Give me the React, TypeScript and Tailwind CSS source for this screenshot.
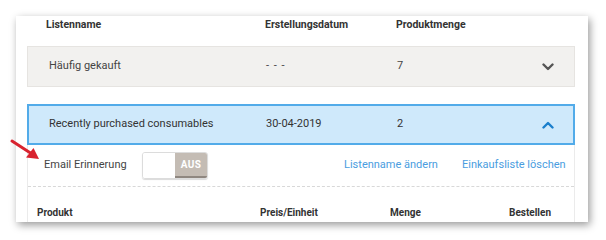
import React from "react";

function ChevronDown({ color }: { color: string }) {
  return (
    <svg width="12" height="8" viewBox="0 0 12 8">
      <path d="M1.5 1.5 L6 6 L10.5 1.5" fill="none" stroke={color} strokeWidth="2.4" strokeLinecap="round" strokeLinejoin="round" />
    </svg>
  );
}
function ChevronUp({ color }: { color: string }) {
  return (
    <svg width="12" height="8" viewBox="0 0 12 8">
      <path d="M1.5 6.5 L6 2 L10.5 6.5" fill="none" stroke={color} strokeWidth="2.4" strokeLinecap="round" strokeLinejoin="round" />
    </svg>
  );
}

export default function App() {
  return (
    <div className="relative w-[606px] h-[240px] bg-white overflow-hidden" style={{ fontFamily: "Roboto, 'Liberation Sans', sans-serif" }}>
      <div className="ml-[16px] mt-[16px] w-[572px] h-[206px] bg-white shadow-[2px_3px_8px_rgba(0,0,0,0.4)] overflow-hidden">
        {/* header */}
        <div className="flex items-center h-[18px] pl-[30px] text-[10.5px] font-bold text-[#333] whitespace-nowrap">
          <div className="w-[219px]">Listenname</div>
          <div className="w-[131px]">Erstellungsdatum</div>
          <div>Produktmenge</div>
        </div>
        <div className="h-[12px]" />
        {/* row 1 */}
        <div className="mx-[11px] w-[548px] h-[41px] flex items-center pl-[21px] pr-[20px] bg-[#f2f1ef] border border-[#e6e4e1] text-[11px] text-[#444] whitespace-nowrap">
          <div className="w-[217px]">Häufig gekauft</div>
          <div className="w-[131px] tracking-[1px]">- - -</div>
          <div className="flex-1">7</div>
          <ChevronDown color="#555" />
        </div>
        <div className="h-[17px]" />
        {/* row 2 */}
        <div className="mx-[11px] w-[548px] h-[41px] flex items-center pl-[20px] pr-[19px] bg-[#cfe9fb] border-2 border-[#52abe9] text-[11px] text-[#333] whitespace-nowrap">
          <div className="w-[217px]">Recently purchased consumables</div>
          <div className="w-[131px]">30-04-2019</div>
          <div className="flex-1">2</div>
          <ChevronUp color="#1b7fcc" />
        </div>
        {/* expanded */}
        <div className="mx-[11px] w-[548px] border-x border-[#ebebeb] h-[80px]">
          <div className="flex items-center h-[41px] pl-[16px] whitespace-nowrap">
            <div className="w-[98px] text-[11px] text-[#444]">Email Erinnerung</div>
            <div className="flex w-[66px] h-[27px] rounded-[3px] border border-[#dcdcdc] overflow-hidden shadow-[0_1px_1px_rgba(0,0,0,0.15)]">
              <div className="w-[32px] bg-white" />
              <div className="flex-1 bg-[#c4bcb4] border-b-2 border-[#8f8780] flex items-center justify-center text-[10px] font-bold text-white tracking-[0.3px]">AUS</div>
            </div>
            <div className="ml-[136px] w-[118px] text-[11px] text-[#4a9de0]">Listenname ändern</div>
            <div className="text-[11px] text-[#4a9de0]">Einkaufsliste löschen</div>
          </div>
          <div className="border-t border-dashed border-[#d8d8d8]" />
          <div className="flex items-center h-[50px] pl-[9px] text-[10px] font-bold text-[#333] whitespace-nowrap">
            <div className="w-[223px]">Produkt</div>
            <div className="w-[130px]">Preis/Einheit</div>
            <div className="w-[119px]">Menge</div>
            <div>Bestellen</div>
          </div>
        </div>
      </div>
      {/* red arrow */}
      <svg className="absolute left-[8px] top-[136px]" width="36" height="28" viewBox="0 0 36 28">
        <path d="M4 5 L24 18" stroke="#d8232f" strokeWidth="3" strokeLinecap="round" />
        <path d="M31 23 L18 21.5 L25.5 12 Z" fill="#d8232f" />
      </svg>
    </div>
  );
}
